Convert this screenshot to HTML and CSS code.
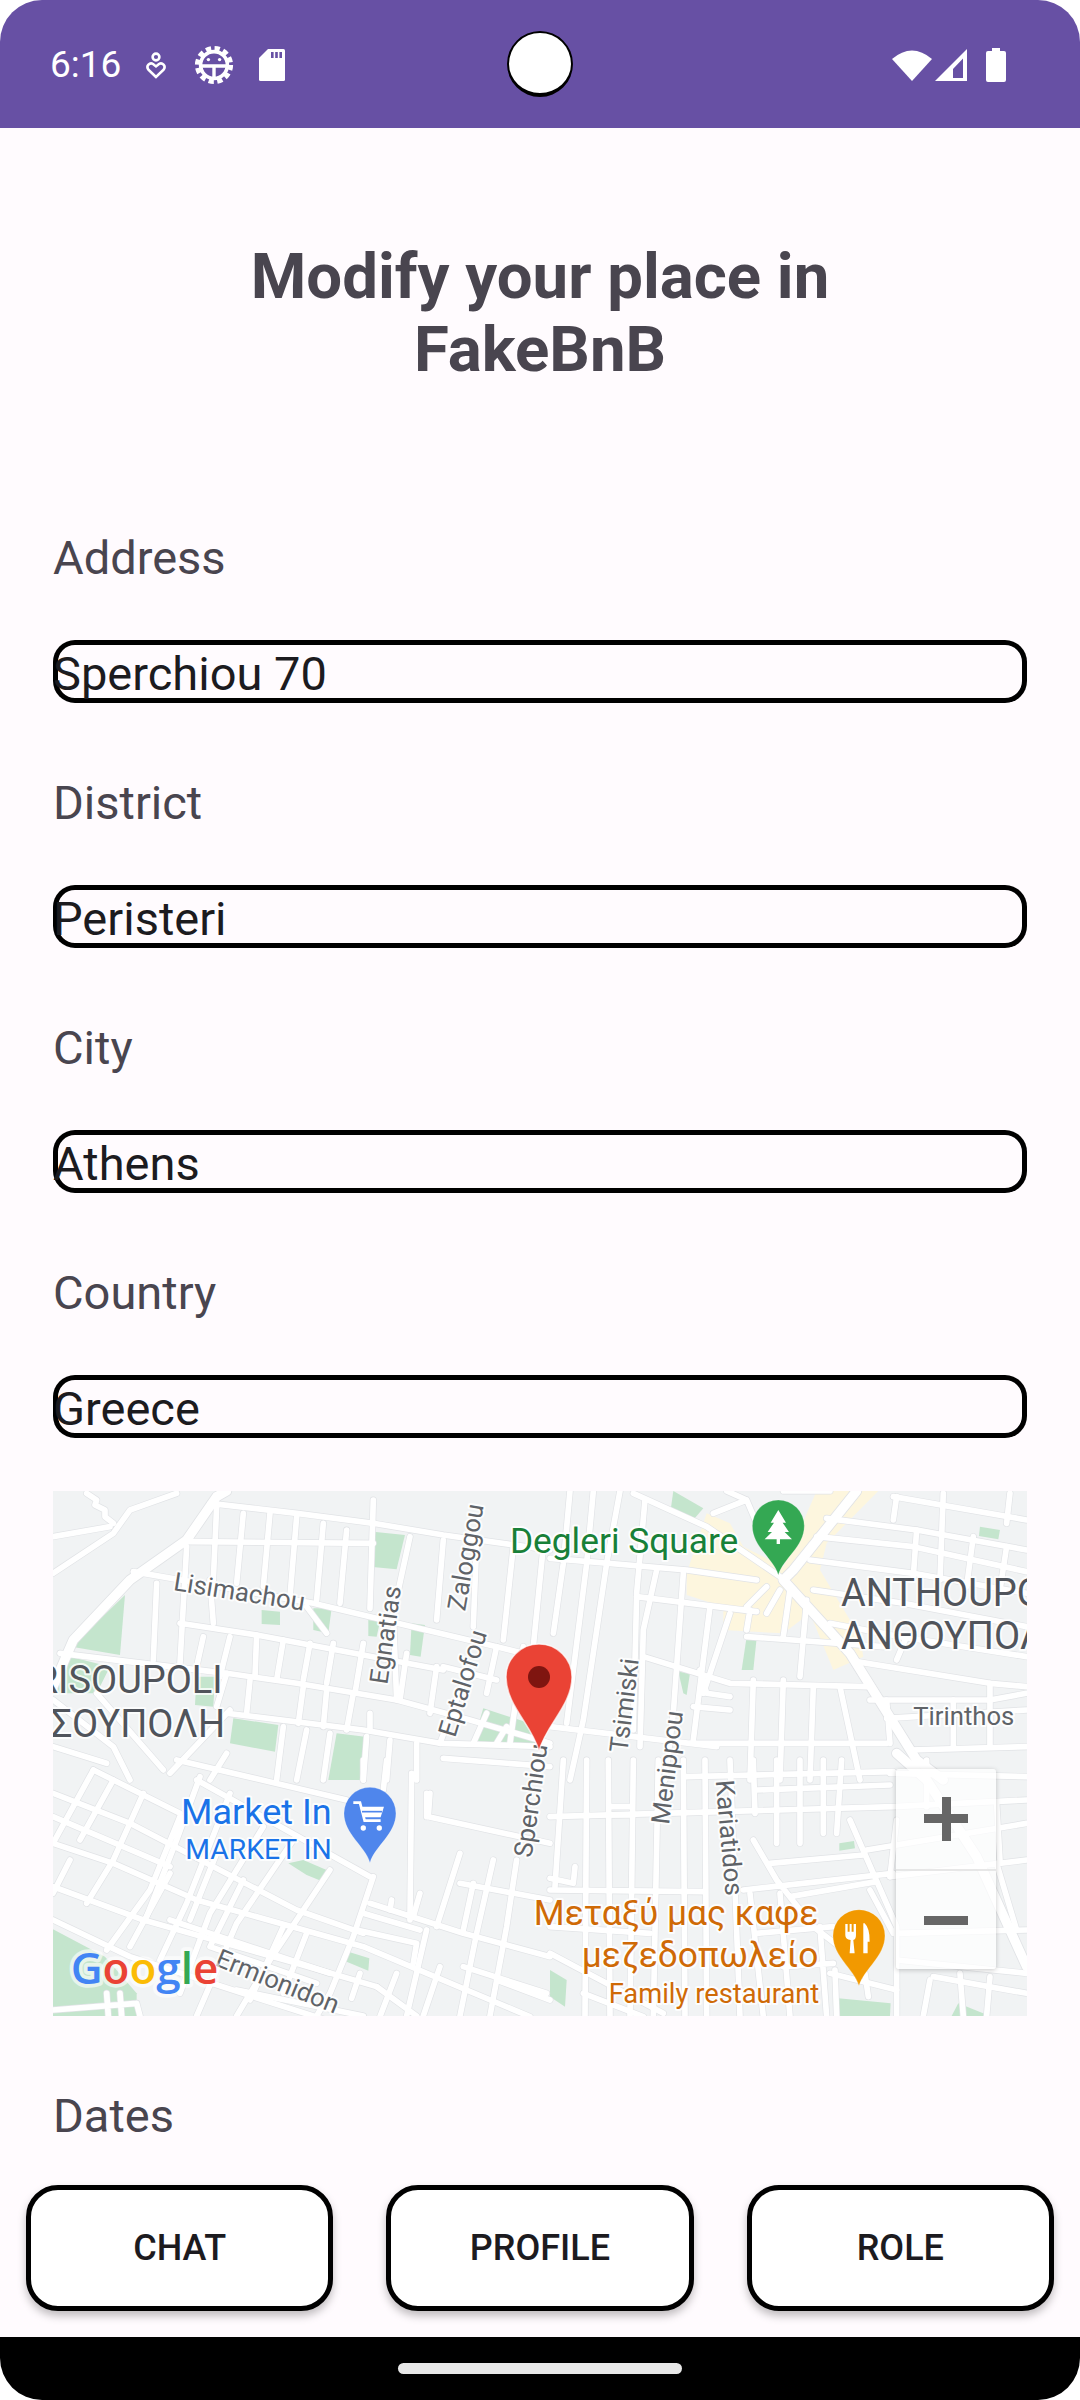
FILE: index.html
```html
<!DOCTYPE html>
<html lang="en">
<head>
    <meta charset="UTF-8">
    <meta name="viewport" content="width=device-width, initial-scale=1.0">
    <title>Modify your place in FakeBnB</title>
    <link rel="stylesheet" href="styles.css">
</head>
<body>
<div class="phone">
    <div class="status-bar">
        <span class="time">6:16</span>
        <svg class="ic-heart" viewBox="0 0 20 27" fill="none" stroke="#fff" stroke-width="2.6">
            <circle cx="10" cy="5" r="3.4"/>
            <path d="M10 25 L2.4 17.6 C-0.4 14 3.8 10 7 12 L10 14.4 L13 12 C16.2 10 20.4 14 17.6 17.6 Z"/>
        </svg>
        <svg class="ic-gear" viewBox="-20 -20 40 40" fill="none" stroke="#fff">
            <circle r="16.6" stroke-width="5" stroke-dasharray="5.2 3.5"/>
            <circle r="13.4" stroke-width="3.6"/>
            <path d="M-13 1 H13 M0 1 V14" stroke-width="3.4"/>
            <circle cx="-5.6" cy="-5.4" r="1.7" fill="#fff" stroke="none"/>
            <circle cx="5.6" cy="-5.4" r="1.7" fill="#fff" stroke="none"/>
        </svg>
        <svg class="ic-sd" viewBox="0 0 26 32">
            <path d="M9 0 H24.5 Q26 0 26 1.5 V30.5 Q26 32 24.5 32 H1.5 Q0 32 0 30.5 V9 Z" fill="#fff"/>
            <path d="M12 3 H14.6 V9 H12 Z M16.2 3 H18.8 V9 H16.2 Z M20.4 3 H23 V9 H20.4 Z" fill="#6750a4"/>
        </svg>
        <div class="camera"></div>
        <svg class="ic-wifi" viewBox="0 0 40 32"><path d="M20 32 L0 10 Q20 -7 40 10 Z" fill="#fff"/></svg>
        <svg class="ic-signal" viewBox="0 0 32 32">
            <path d="M32 0 V32 H0 Z M28 9.5 L18 20 V29 H28 Z" fill="#fff" fill-rule="evenodd"/>
        </svg>
        <svg class="ic-battery" viewBox="0 0 20 34">
            <path d="M6 0 H14 V3 H18 Q20 3 20 5 V32 Q20 34 18 34 H2 Q0 34 0 32 V5 Q0 3 2 3 H6 Z" fill="#fff"/>
        </svg>
    </div>

    <main class="content">
        <h1 class="title">Modify your place in<br>FakeBnB</h1>

        <div class="field">
            <div class="label">Address</div>
            <div class="value">Sperchiou 70</div>
        </div>
        <div class="field">
            <div class="label">District</div>
            <div class="value">Peristeri</div>
        </div>
        <div class="field">
            <div class="label">City</div>
            <div class="value">Athens</div>
        </div>
        <div class="field">
            <div class="label">Country</div>
            <div class="value">Greece</div>
        </div>

        <div class="map">
            <svg class="map-svg" viewBox="53 1491 974 525" xmlns="http://www.w3.org/2000/svg">
                <defs>
                    <g id="minor">
                        <!-- top left tile -->
                        <g transform="translate(30 1480) scale(.3333)">
                            <path d="M170 40 L200 60 L195 75 L225 90 L225 110 L250 130 M69 170 L240 140 M69 280 L250 160 L300 90 L440 40"/>
                            <path d="M540 70 L800 100 L1030 130 L1240 165 L1560 210 M480 185 L1030 190 M310 275 L850 370 L1400 500 L1560 540 M450 430 L680 465 L1240 570 M90 520 L590 580 L800 610 L1100 660 L1320 720 L1560 790"/>
                            <path d="M590 700 L1000 750 L1230 790 L1560 800 M1240 835 L1560 860 M69 800 L230 850 M660 600 L650 700 M590 580 L560 680 M70 660 L250 800 L300 900 M200 640 L400 870 M420 880 L600 690 M590 820 L540 900"/>
                            <path d="M560 80 L550 300 M640 100 L620 310 M720 100 L700 320 M800 110 L780 350 M880 130 L860 360 M950 150 L930 370 M1030 60 L1020 385 M1140 170 L1090 400 L1100 660 M1240 180 L1220 420 M1340 190 L1330 440 M1450 200 L1420 480 M1540 200 L1510 500"/>
                            <path d="M380 310 L370 540 M470 200 L450 550 M680 465 L675 590 M760 480 L740 600 M840 490 L820 600 M910 490 L890 610 M1000 490 L975 640 M1130 520 L1110 660 M1220 560 L1200 700 M1310 580 L1230 790 M520 470 L500 560 M600 470 L570 590"/>
                            <path d="M820 620 L805 730 M890 630 L880 740 M970 640 L950 750 M830 380 L890 460 M760 740 L740 900 M830 750 L800 900 M900 760 L880 900 M1010 770 L1000 900 M1080 780 L1070 900 M1160 790 L1160 900 M1020 700 L1020 750"/>
                            <path d="M1370 700 L1330 790 M1430 740 L1400 790 M1240 560 L1400 600 M1400 500 L1370 640 M1480 500 L1440 790 M540 300 L550 430"/>
                        </g>
                        <!-- top right tile -->
                        <g transform="translate(550 1480) scale(.3333)">
                            <path d="M60 33 L40 250 L10 460 M130 33 L110 250 L50 730 M210 33 L170 250 L100 720 L60 900 M285 60 L260 340 L250 750 M320 270 L280 450 L270 800 M400 280 L370 700 L345 900 M480 380 L430 780 M540 400 L460 640 M610 600 L600 900 M700 600 L690 900 M790 620 L780 900 M870 620 L930 900"/>
                            <path d="M0 235 L410 270 L620 300 M260 350 L620 395 M250 40 L470 140 L690 290 M0 740 L500 800 M280 530 L540 610 L950 620 M430 680 L540 690 M420 790 L1010 790 M590 380 L650 320 M650 400 L690 330 M590 470 L1000 500 M720 330 L700 470 M770 360 L750 590 M600 390 L590 450 M490 100 L590 60 L530 33 M840 33 L700 33 M590 60 L620 130"/>
                            <path d="M1030 50 L1430 120 M830 115 L1100 150 L1430 210 M800 170 L1090 200 L1430 275 M780 240 L1090 280 L1430 340 M790 330 L1060 370 L1430 440 M840 430 L1050 470 L1430 530 M920 545 L1320 610 L1430 620 M960 660 L1320 660 L1430 640 M1010 715 L1430 690 M1080 810 L1430 800"/>
                            <path d="M1040 50 L1030 120 M1180 40 L1170 300 M1100 150 L1090 290 M1380 40 L1370 130 M1270 170 L1250 320 M1370 200 L1350 330 M1070 470 L1040 540 M1320 610 L1320 800 M1210 660 L1210 800 M1010 660 L1020 790 M450 570 L470 640 L540 650"/>
                        </g>
                        <!-- bottom left tile -->
                        <g transform="translate(30 1760) scale(.3333)">
                            <path d="M440 0 L950 120 M190 30 L450 160 M500 60 L1020 350 M69 250 L250 310 L500 420 L1000 560 L1500 770 M69 100 L300 190 L800 450 L1000 520 M69 380 L340 480 L800 610 L1040 680 M69 480 L300 590 L700 720 L950 800 M1020 430 L1300 520 L1560 590 M1000 460 L1170 510 M980 510 L1160 550 L1150 610 M1200 100 L1195 170 L1560 250"/>
                            <path d="M190 30 L69 250 M340 100 L250 300 L170 430 M450 170 L360 390 L230 570 M510 50 L440 240 L350 470 M600 100 L470 430 L390 600 M700 200 L540 460 L450 700 M790 240 L620 490 L500 768 M900 330 L720 600 L620 768 M1030 350 L970 530 L900 700 L860 768"/>
                            <path d="M1290 280 L1220 500 M1390 300 L1340 520 L1290 768 M1460 300 L1430 500 L1380 768 M1330 370 L1300 510 M1170 400 L1150 470 M1085 420 L1080 450 M1190 510 L1130 768 M1230 620 L1180 768 M1040 680 L1160 768 M990 640 L965 715 M1300 620 L1550 700"/>
                            <path d="M230 700 L235 768 M270 700 L275 768 M69 750 L320 730 M320 730 L330 768 M1140 480 L1145 40 M1070 0 L1060 90"/>
                            <path d="M250 60 L150 240 M120 300 L69 400 M420 340 L300 560 M560 280 L480 480 M640 360 L540 560 M760 500 L660 720 M830 520 L760 700 M69 170 L420 320 M420 480 L900 640 M540 560 L860 670 M620 690 L1000 768 M1560 420 L1290 370 M1050 770 L1100 640 M1400 660 L1560 720 M1000 0 L1000 60 M1190 170 L1190 100"/>
                        </g>
                        <!-- bottom right tile -->
                        <g transform="translate(550 1760) scale(.3333)">
                            <path d="M40 0 L15 380 M110 0 L105 770 M175 0 L180 770 M250 0 L240 770 M325 0 L310 770 M400 0 L405 770 M465 0 L470 770 M540 0 L570 770 M610 0 L615 160 M680 0 L680 250 M750 0 L750 250 M820 0 L820 220 M875 0 L860 220 M900 180 L1040 500 L1040 768 M1140 660 L1120 768"/>
                            <path d="M0 170 L1030 140 M0 355 L70 370 L75 320 M0 390 L460 395 M610 240 L680 360 L790 500 L920 600 M580 390 L1030 340 M660 310 L940 285 M720 410 L980 365 M1020 40 L1430 50 M1030 140 L1430 120 M950 270 L1430 190 M1020 350 L1430 300 M1040 520 L1430 510 M1040 600 L1430 640 M1150 650 L1430 700 M0 580 L340 760 M100 700 L280 770"/>
                            <path d="M1130 0 L1130 140 M1340 130 L1350 300 M1340 310 L1400 510 M1040 180 L1020 350 M1230 640 L1240 768 M1320 650 L1310 768 M945 640 L955 710 M855 630 L860 768 M180 140 L245 140 M185 165 L245 165"/>
                            <path d="M410 50 L1030 35 M600 400 L640 770 M690 400 L720 770 M810 500 L830 770 M620 520 L850 500 M700 620 L850 610 M840 640 L1040 690 M0 500 L300 520 M620 90 L1020 75 M960 390 L1030 520"/>
                        </g>
                    </g>
                    <g id="major">
                        <g transform="translate(30 1480) scale(.3333)">
                            <path d="M69 620 L130 480 L300 300 L470 180 L560 50 L590 33"/>
                        </g>
                        <g transform="translate(550 1480) scale(.3333)">
                            <path d="M920 33 L730 270 L700 300 L900 520 L1100 840 L1180 900"/>
                        </g>
                        <g transform="translate(550 1760) scale(.3333)">
                            <path d="M1040 -20 L1130 60 L1280 290 L1430 620"/>
                        </g>
                    </g>
                </defs>

                <rect x="53" y="1491" width="974" height="525" fill="#f1f3f4"/>

                <!-- parks and the shopping area -->
                <g transform="translate(550 1480) scale(.3333)">
                    <polygon class="yellow" points="410,280 470,100 540,130 580,200 700,260 800,33 985,33 830,190 810,270 930,470 940,530 850,570 780,400 700,460 520,450 520,380 410,345"/>
                    <polygon class="park" points="370,33 460,85 425,125 362,90"/>
                    <polygon class="park" points="1290,140 1350,150 1345,178 1287,168"/>
                    <polygon class="park" points="590,470 620,475 610,570 575,570"/>
                    <polygon class="park" points="385,575 420,580 410,645 400,640"/>
                </g>
                <g transform="translate(30 1480) scale(.3333)">
                    <polygon class="park" points="125,500 285,345 270,525"/>
                    <polygon class="park" points="100,525 240,560 200,640 69,640"/>
                    <polygon class="park" points="1030,155 1125,165 1100,268 1020,260"/>
                    <polygon class="park" points="695,390 750,395 750,435 695,432"/>
                    <polygon class="park" points="850,385 905,385 895,460 850,450"/>
                    <polygon class="park" points="1015,420 1050,425 1040,470 1015,468"/>
                    <polygon class="park" points="1145,430 1185,435 1172,530 1140,525"/>
                    <polygon class="park" points="610,715 745,735 735,815 600,790"/>
                    <polygon class="park" points="920,760 1005,770 995,900 895,900"/>
                    <polygon class="park" points="1360,685 1500,730 1520,790 1330,785"/>
                    <polygon class="park" points="500,590 555,590 550,680 495,675"/>
                </g>
                <g transform="translate(30 1760) scale(.3333)">
                    <polygon class="park" points="69,508 225,590 320,700 320,768 69,768"/>
                    <polygon class="park" points="955,575 1018,595 1015,632 950,605"/>
                    <polygon class="park" points="775,310 820,300 890,330 880,365 830,345"/>
                </g>
                <g transform="translate(550 1760) scale(.3333)">
                    <polygon class="park" points="865,715 1022,730 1020,768 860,768"/>
                    <polygon class="park" points="1205,768 1225,730 1320,768"/>
                    <polygon class="park" points="868,250 912,243 915,265 868,272"/>
                    <polygon class="park" points="0,630 50,660 45,740 0,710"/>
                    <polygon class="park" points="1010,485 1040,485 1040,500 1010,498"/>
                </g>

                <use href="#minor" class="minor-casing"/>
                <use href="#major" class="major-casing"/>
                <use href="#minor" class="minor-fill"/>
                <use href="#major" class="major-fill"/>

                <!-- street and area names -->
                <g transform="translate(30 1480) scale(.3333)">
                    <text class="street" transform="translate(428 330) rotate(9)">Lisimachou</text>
                    <text class="street" transform="translate(1072 615) rotate(-82)">Egnatias</text>
                    <text class="street" transform="translate(1305 395) rotate(-80)">Zaloggou</text>
                    <text class="street" transform="translate(1275 775) rotate(-73)">Eptalofou</text>
                    <text class="area" x="578" y="640" text-anchor="end">CHRISOUPOLI</text>
                    <text class="area" x="585" y="770" text-anchor="end">ΧΡΥΣΟΥΠΟΛΗ</text>
                </g>
                <g transform="translate(550 1480) scale(.3333)">
                    <text class="park-name" x="565" y="218" text-anchor="end">Degleri Square</text>
                    <path class="pin" fill="#34a853" d="M685 285 C670 235 607 200 607 138 A78 78 0 0 1 763 138 C763 200 700 235 685 285 Z"/>
                    <path fill="#fff" d="M685 90 L708 128 L698 128 L717 156 L704 156 L726 178 L690 178 V192 H680 V178 L644 178 L666 156 L653 156 L672 128 L662 128 Z"/>
                    <text class="area" x="873" y="378">ANTHOUPOLI</text>
                    <text class="area" x="873" y="508">ΑΝΘΟΥΠΟΛΗ</text>
                    <text class="street" x="1090" y="735">Tirinthos</text>
                    <text class="street" transform="translate(232 820) rotate(-83)">Tsimiski</text>
                </g>
                <g transform="translate(550 1760) scale(.3333)">
                    <text class="street" transform="translate(357 195) rotate(-83)">Menippou</text>
                    <text class="street" transform="translate(497 62) rotate(85)">Kariatidos</text>
                    <text class="food" x="805" y="495" text-anchor="end">Μεταξύ μας καφε</text>
                    <text class="food" x="805" y="622" text-anchor="end">μεζεδοπωλείο</text>
                    <text class="food-sub" x="808" y="730" text-anchor="end">Family restaurant</text>
                    <path class="pin" fill="#f29900" d="M927 677 C912 627 849 589 849 527 A78 78 0 0 1 1005 527 C1005 589 942 627 927 677 Z"/>
                    <path fill="#fff" d="M886 492 H893 V515 H899 V492 H905 V515 H911 V492 H918 V525 Q918 538 910 540 L914 580 H899 L902 540 Q886 538 886 525 Z"/>
                    <path fill="#fff" d="M944 490 Q960 505 959 545 H953 V580 H940 V490 Z"/>
                </g>
                <g transform="translate(30 1760) scale(.3333)">
                    <text class="shop" x="905" y="192" text-anchor="end">Market In</text>
                    <text class="shop-sub" x="905" y="296" text-anchor="end">MARKET IN</text>
                    <path class="pin" fill="#4f86ec" d="M1020 308 C1005 258 942 222 942 160 A78 78 0 0 1 1098 160 C1098 222 1035 258 1020 308 Z"/>
                    <path fill="none" stroke="#fff" stroke-width="8" d="M970 128 H990 L1004 182 H1052"/>
                    <path fill="#fff" d="M990 140 H1062 L1052 172 H1000 Z"/>
                    <path fill="none" stroke="#4f86ec" stroke-width="5" d="M996 155 H1056"/>
                    <circle cx="1000" cy="204" r="8" fill="#fff"/>
                    <circle cx="1048" cy="204" r="8" fill="#fff"/>
                    <text class="street" transform="translate(552 615) rotate(22)">Ermionidon</text>
                    <text class="google" x="122" y="672"><tspan fill="#4285f4">G</tspan><tspan fill="#ea4335">o</tspan><tspan fill="#fbbc05">o</tspan><tspan fill="#4285f4">g</tspan><tspan fill="#34a853">l</tspan><tspan fill="#ea4335">e</tspan></text>
                    <text class="street" transform="translate(1505 295) rotate(-82)">Sperchiou</text>
                </g>

                <!-- selected place -->
                <path d="M539 1751 C532 1725 506 1705 506 1677 A33 33 0 0 1 572 1677 C572 1705 546 1725 539 1751 Z" fill="#ea4335" stroke="#fff" stroke-opacity=".7" stroke-width="1.5"/>
                <circle cx="539" cy="1677" r="11" fill="#7f1510"/>
            </svg>
            <div class="zoom-ctl">
                <div class="zoom-btn"><span class="zoom-h"></span><span class="zoom-v"></span></div>
                <div class="zoom-btn"><span class="zoom-h"></span></div>
            </div>
        </div>

        <div class="field dates">
            <div class="label">Dates</div>
        </div>
    </main>

    <div class="actions">
        <button class="action">CHAT</button>
        <button class="action">PROFILE</button>
        <button class="action">ROLE</button>
    </div>

    <div class="nav-bar"><div class="home-pill"></div></div>
</div>
</body>
</html>
```

FILE: styles.css
```css
* {
    box-sizing: border-box;
}

html, body {
    margin: 0;
    background: #fff;
}

body {
    font-family: 'Roboto', sans-serif;
}

.phone {
    width: 1080px;
    height: 2400px;
    display: flex;
    flex-direction: column;
    position: relative;
    overflow: hidden;
    border-radius: 42px;
    background-color: #fffbfe;
}

/* status bar */
.status-bar {
    height: 128px;
    flex-shrink: 0;
    display: flex;
    align-items: center;
    padding: 2px 74px 0 50px;
    background-color: #6750a4;
    position: relative;
}

.time {
    color: #fff;
    font-size: 37px;
    line-height: 40px;
    width: 70px;
}

.ic-heart {
    width: 20px;
    height: 27px;
    margin-left: 26px;
}

.ic-gear {
    width: 40px;
    height: 40px;
    margin-left: 28px;
}

.ic-sd {
    width: 26px;
    height: 32px;
    margin-left: 25px;
}

.ic-wifi {
    width: 40px;
    height: 32px;
    margin-left: auto;
}

.ic-signal {
    width: 32px;
    height: 32px;
    margin-left: 3px;
}

.ic-battery {
    width: 20px;
    height: 34px;
    margin-left: 19px;
}

.camera {
    position: absolute;
    left: 507px;
    top: 31px;
    width: 66px;
    height: 66px;
    border-radius: 50%;
    background-color: #fff;
    border: 2px solid #000;
    border-bottom-width: 4px;
}

/* form */
.content {
    flex: 1;
    min-height: 0;
    overflow: hidden;
    padding: 112px 53px 0;
}

.title {
    margin: 0 0 146px;
    font-size: 63.5px;
    line-height: 73px;
    font-weight: 700;
    color: #49454f;
    text-align: center;
}

.field {
    margin-bottom: 74px;
}

.label {
    height: 50px;
    margin-bottom: 58px;
    font-size: 47px;
    line-height: 52px;
    color: #49454f;
}

.value {
    height: 63px;
    border-radius: 22px;
    box-shadow: inset 0 0 0 5px #000;
    font-size: 47px;
    line-height: 68px;
    color: #1c1b1f;
    white-space: nowrap;
}

.dates {
    margin-top: 74px;
    margin-bottom: 0;
}

/* map */
.map {
    position: relative;
    height: 525px;
    margin-top: -21px;
}

.map-svg {
    display: block;
    width: 974px;
    height: 525px;
    font-family: 'Roboto', sans-serif;
}

.map-svg text {
    paint-order: stroke;
    stroke-linejoin: round;
}

.park {
    fill: #c4e5cd;
}

.yellow {
    fill: #fdf6de;
}

.minor-casing, .minor-fill, .major-casing, .major-fill {
    fill: none;
    stroke-linecap: round;
    stroke-linejoin: round;
}

.minor-casing {
    stroke: #e1e3e6;
    stroke-width: 21px;
}

.minor-fill {
    stroke: #fff;
    stroke-width: 17px;
}

.major-casing {
    stroke: #e1e3e6;
    stroke-width: 33px;
}

.major-fill {
    stroke: #fff;
    stroke-width: 28px;
}

.pin {
    stroke: rgba(255, 255, 255, .25);
    stroke-width: 3px;
}

.street {
    font-size: 77px;
    fill: #5f6368;
    stroke: #fff;
    stroke-width: 12px;
    stroke-opacity: .85;
}

.area {
    font-size: 114px;
    fill: #50545b;
    stroke: #fff;
    stroke-width: 12px;
    stroke-opacity: .8;
}

.park-name {
    font-size: 106px;
    fill: #188038;
    stroke: #fff;
    stroke-width: 12px;
    stroke-opacity: .85;
}

.shop {
    font-size: 108px;
    fill: #1a73e8;
    stroke: #fff;
    stroke-width: 12px;
    stroke-opacity: .85;
}

.shop-sub {
    font-size: 85px;
    fill: #1a73e8;
    stroke: #fff;
    stroke-width: 12px;
    stroke-opacity: .85;
}

.food {
    font-size: 106px;
    fill: #cf6a06;
    stroke: #fff;
    stroke-width: 12px;
    stroke-opacity: .85;
}

.food-sub {
    font-size: 82px;
    fill: #cf6a06;
    stroke: #fff;
    stroke-width: 12px;
    stroke-opacity: .85;
}

.google {
    font-family: 'Open Sans', sans-serif;
    font-size: 132px;
    font-weight: 600;
    letter-spacing: 0;
    stroke: #fff;
    stroke-width: 22px;
    stroke-opacity: .6;
}

.zoom-ctl {
    position: absolute;
    right: 31px;
    bottom: 47px;
    width: 100px;
    height: 200px;
    border-radius: 3px;
    background-color: rgba(255, 255, 255, .72);
    box-shadow: 0 1px 5px rgba(0, 0, 0, .22);
}

.zoom-btn {
    height: 100px;
    position: relative;
}

.zoom-btn + .zoom-btn {
    border-top: 2px solid rgba(225, 225, 225, .8);
}

.zoom-h, .zoom-v {
    position: absolute;
    background-color: #666;
}

.zoom-h {
    left: 28px;
    top: 45px;
    width: 44px;
    height: 9px;
}

.zoom-v {
    left: 46px;
    top: 28px;
    width: 9px;
    height: 44px;
}

/* bottom buttons */
.actions {
    height: 177px;
    flex-shrink: 0;
    display: flex;
    gap: 53px;
    padding: 25px 26px 26px;
}

.action {
    flex: 1;
    border: 5px solid #000;
    border-radius: 32px;
    background-color: #fff;
    box-shadow: 0 5px 8px rgba(0, 0, 0, .25);
    font-family: 'Roboto', sans-serif;
    font-size: 36px;
    font-weight: 500;
    color: #1c1b1f;
}

.nav-bar {
    height: 63px;
    flex-shrink: 0;
    display: flex;
    justify-content: center;
    padding-top: 26px;
    background-color: #000;
}

.home-pill {
    width: 284px;
    height: 11px;
    border-radius: 6px;
    background-color: #e8e8e8;
}
```
